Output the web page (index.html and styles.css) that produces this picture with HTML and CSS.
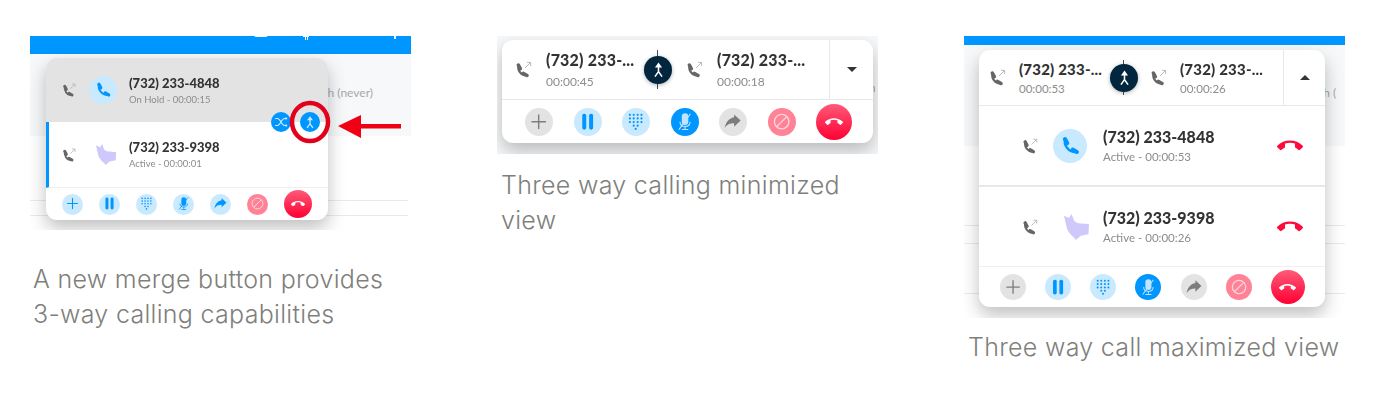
FILE: index.html
```html
<!DOCTYPE html>
<html lang="en">
<head>
  <meta charset="UTF-8" />
  <title>Three way calling</title>
  <link rel="stylesheet" href="styles.css">
</head>
<body>

  <!-- Shared icons -->
  <svg class="sprite" xmlns="http://www.w3.org/2000/svg">
    <symbol id="i-phone" viewBox="0 0 24 24">
      <g fill="none" stroke="currentColor" stroke-linecap="round">
        <path d="M7 5C4.500 10 10 19 19 18.500" stroke-width="2.600"/>
        <path d="M6.500 4.500L9 9M15 16l4.500 2.500" stroke-width="4.500"/>
      </g>
    </symbol>
    <symbol id="i-outgoing" viewBox="0 0 24 24">
      <g fill="none" stroke="currentColor" stroke-linecap="round">
        <path d="M6 7C4 12 8.500 20 16 19.500" stroke-width="2.800"/>
        <path d="M5.500 6.500L8 11M12 17l4.500 2.500" stroke-width="4.500"/>
      </g>
      <path d="M14 10l7-7M16.500 3H21v4.500" fill="none" stroke="#b5b5b5" stroke-width="1.200"/>
    </symbol>
    <symbol id="i-hangup" viewBox="0 0 24 24"><path d="M12 9c-1.600 0-3.150.25-4.600.72v3.100c0 .39-.23.74-.56.9-.98.49-1.870 1.120-2.660 1.850-.18.18-.43.28-.7.28-.28 0-.53-.11-.71-.29L.29 13.080c-.18-.17-.29-.42-.29-.7 0-.28.11-.53.29-.71C3.340 8.780 7.460 7 12 7s8.660 1.780 11.710 4.670c.18.18.29.43.29.71 0 .28-.11.53-.29.71l-2.480 2.480c-.18.18-.43.29-.71.29-.27 0-.52-.11-.7-.28-.79-.74-1.690-1.360-2.670-1.850-.33-.16-.56-.5-.56-.9v-3.100C15.150 9.250 13.600 9 12 9z"/></symbol>
    <symbol id="i-plus" viewBox="0 0 24 24"><path d="M12 2v20M2 12h20" fill="none" stroke="currentColor" stroke-width="2"/></symbol>
    <symbol id="i-pause" viewBox="0 0 24 24"><rect x="4.500" y="1" width="5.500" height="22" rx="2.500"/><rect x="14" y="1" width="5.500" height="22" rx="2.500"/></symbol>
    <symbol id="i-dial" viewBox="0 0 24 24">
      <circle cx="4" cy="2.500" r="1.500"/><circle cx="9.300" cy="2.500" r="1.500"/><circle cx="14.700" cy="2.500" r="1.500"/><circle cx="20" cy="2.500" r="1.500"/>
      <circle cx="4" cy="7.500" r="1.500"/><circle cx="9.300" cy="7.500" r="1.500"/><circle cx="14.700" cy="7.500" r="1.500"/><circle cx="20" cy="7.500" r="1.500"/>
      <circle cx="4" cy="12.500" r="1.500"/><circle cx="9.300" cy="12.500" r="1.500"/><circle cx="14.700" cy="12.500" r="1.500"/><circle cx="20" cy="12.500" r="1.500"/>
      <circle cx="9.300" cy="17.500" r="1.500"/><circle cx="14.700" cy="17.500" r="1.500"/><circle cx="12" cy="22" r="1.500"/>
    </symbol>
    <symbol id="i-mic" viewBox="0 0 24 24">
      <path d="M8 5a4.500 4.500 0 0 1 9 0v7a4.500 4.500 0 0 1-9 0z"/>
      <path d="M5.500 12c0 4 3 6.500 7 6.500s7-2.500 7-6.500M12.500 18.500V22M8 23h9" fill="none" stroke="currentColor" stroke-width="1.500"/>
      <path d="M20 1L4 23" fill="none" stroke="currentColor" stroke-width="1.500"/>
    </symbol>
    <symbol id="i-forward" viewBox="0 0 24 24"><path d="M14 6V2l9 8.500-9 8.500v-4.700C8 14.300 4 16 1 21 2 14 6 7.500 14 6z"/></symbol>
    <symbol id="i-block" viewBox="0 0 24 24"><circle cx="12" cy="12" r="10" fill="none" stroke="currentColor" stroke-width="1.800"/><path d="M5 19L19 5" stroke="currentColor" stroke-width="1.800"/></symbol>
    <symbol id="i-merge" viewBox="0 0 24 24">
      <path d="M12 2l-5 7h10z"/>
      <path d="M12 8v8M12 15l-5 7M12 15l5 7" fill="none" stroke="currentColor" stroke-width="2.200"/>
    </symbol>
    <symbol id="i-swap" viewBox="0 0 24 24">
      <path d="M2 6h4c5 0 7 12 12 12h4M2 18h4c5 0 7-12 12-12h4" fill="none" stroke="currentColor" stroke-width="1.800"/>
      <path d="M20 3l3 3-3 3zM20 15l3 3-3 3z"/>
    </symbol>
    <symbol id="i-cat" viewBox="0 0 24 24"><path d="M0 1.500L4.700 3.700 7 0l2.300 6.200C11 8 13 8.500 15.500 8.700l7.500.6-.4 9.300-7.100 1.400-4.600 4-1.600-2.300C6 19 2.500 15 2.200 11z"/></symbol>
  </svg>

  <main class="page">

    <!-- Merge button on the two line view -->
    <figure class="fig">
      <div class="shot shot-merge">
        <svg class="topbar-bits" width="381" height="8">
          <path d="M224 0h14l-2 1h-10zM273 0h6v1h-1v3h-1v-3h-1v3h-1v-3h-2zM364 0h2v3h-2z" fill="#fff"/>
        </svg>
        <span class="ghost ghost-merge">sh (never)</span>
        <div class="card card-sm">
          <div class="call on-hold">
            <svg class="ico-out"><use href="#i-outgoing"/></svg>
            <span class="avatar"><svg><use href="#i-phone"/></svg></span>
            <div>
              <div class="name">(732) 233-4848</div>
              <div class="sub">On Hold - 00:00:15</div>
            </div>
          </div>
          <div class="call active">
            <svg class="ico-out"><use href="#i-outgoing"/></svg>
            <span class="avatar avatar-cat"><svg><use href="#i-cat"/></svg></span>
            <div>
              <div class="name">(732) 233-9398</div>
              <div class="sub">Active - 00:00:01</div>
            </div>
          </div>
          <div class="toolbar">
            <button class="btn"><svg><use href="#i-plus"/></svg></button>
            <button class="btn"><svg><use href="#i-pause"/></svg></button>
            <button class="btn"><svg><use href="#i-dial"/></svg></button>
            <button class="btn"><svg><use href="#i-mic"/></svg></button>
            <button class="btn"><svg><use href="#i-forward"/></svg></button>
            <button class="btn btn-block"><svg><use href="#i-block"/></svg></button>
            <button class="btn btn-end"><svg><use href="#i-hangup"/></svg></button>
          </div>
          <div class="card-actions">
            <button class="btn-float"><svg><use href="#i-swap"/></svg></button>
            <button class="btn-float"><svg><use href="#i-merge"/></svg></button>
          </div>
        </div>
        <!-- Red callout round the merge button -->
        <svg class="callout" width="381" height="194">
          <ellipse cx="280" cy="86" rx="18" ry="19" fill="none" stroke="#e3001b" stroke-width="4.500"/>
          <path d="M308 90l23-11v9h40v4.500h-40v9.500z" fill="#f00014"/>
        </svg>
      </div>
      <figcaption class="caption caption-merge">A new merge button provides<br>3-way calling capabilities</figcaption>
    </figure>

    <!-- Minimized view -->
    <figure class="fig">
      <div class="shot shot-min">
        <span class="ghost ghost-min">h</span>
        <div class="card card-md">
          <div class="legs">
            <div class="leg leg-first">
              <svg class="ico-out"><use href="#i-outgoing"/></svg>
              <div>
                <div class="name">(732) 233-...</div>
                <div class="sub">00:00:45</div>
              </div>
            </div>
            <div class="join"><span class="join-btn"><svg><use href="#i-merge"/></svg></span></div>
            <div class="leg leg-second">
              <svg class="ico-out"><use href="#i-outgoing"/></svg>
              <div>
                <div class="name">(732) 233-...</div>
                <div class="sub">00:00:18</div>
              </div>
            </div>
            <div class="toggle"><span class="caret-down"></span></div>
          </div>
          <div class="toolbar">
            <button class="btn btn-gray"><svg><use href="#i-plus"/></svg></button>
            <button class="btn"><svg><use href="#i-pause"/></svg></button>
            <button class="btn"><svg><use href="#i-dial"/></svg></button>
            <button class="btn btn-on"><svg><use href="#i-mic"/></svg></button>
            <button class="btn btn-gray"><svg><use href="#i-forward"/></svg></button>
            <button class="btn btn-block"><svg><use href="#i-block"/></svg></button>
            <button class="btn btn-end"><svg><use href="#i-hangup"/></svg></button>
          </div>
        </div>
      </div>
      <figcaption class="caption caption-min">Three way calling minimized<br>view</figcaption>
    </figure>

    <!-- Maximized view -->
    <figure class="fig">
      <div class="shot shot-max">
        <span class="ghost ghost-max">sh (</span>
        <div class="card card-lg">
          <div class="legs">
            <div class="leg leg-first">
              <svg class="ico-out"><use href="#i-outgoing"/></svg>
              <div>
                <div class="name">(732) 233-...</div>
                <div class="sub">00:00:53</div>
              </div>
            </div>
            <div class="join"><span class="join-btn"><svg><use href="#i-merge"/></svg></span></div>
            <div class="leg leg-second">
              <svg class="ico-out"><use href="#i-outgoing"/></svg>
              <div>
                <div class="name">(732) 233-...</div>
                <div class="sub">00:00:26</div>
              </div>
            </div>
            <div class="toggle"><span class="caret-up"></span></div>
          </div>
          <div class="call">
            <svg class="ico-out"><use href="#i-outgoing"/></svg>
            <span class="avatar"><svg><use href="#i-phone"/></svg></span>
            <div class="call-text">
              <div class="name">(732) 233-4848</div>
              <div class="sub">Active - 00:00:53</div>
            </div>
            <svg class="ico-end"><use href="#i-hangup"/></svg>
          </div>
          <div class="call">
            <svg class="ico-out"><use href="#i-outgoing"/></svg>
            <span class="avatar avatar-cat"><svg><use href="#i-cat"/></svg></span>
            <div class="call-text">
              <div class="name">(732) 233-9398</div>
              <div class="sub">Active - 00:00:26</div>
            </div>
            <svg class="ico-end"><use href="#i-hangup"/></svg>
          </div>
          <div class="toolbar">
            <button class="btn btn-gray"><svg><use href="#i-plus"/></svg></button>
            <button class="btn"><svg><use href="#i-pause"/></svg></button>
            <button class="btn"><svg><use href="#i-dial"/></svg></button>
            <button class="btn btn-on"><svg><use href="#i-mic"/></svg></button>
            <button class="btn btn-gray"><svg><use href="#i-forward"/></svg></button>
            <button class="btn btn-block"><svg><use href="#i-block"/></svg></button>
            <button class="btn btn-end"><svg><use href="#i-hangup"/></svg></button>
          </div>
        </div>
      </div>
      <figcaption class="caption caption-max">Three way call maximized view</figcaption>
    </figure>

  </main>
</body>
</html>
```

FILE: styles.css
```css
* { box-sizing: border-box; }

body {
  margin: 0;
  background: #fff;
  font-family: 'Lato', sans-serif;
  overflow: hidden;
}

.sprite { display: none; }

/* Three figures side by side */
.page {
  display: flex;
  gap: 86px;
  padding: 36px 0 0 30px;
}

.fig {
  margin: 0;
  width: 381px;
  flex: none;
}

/* Captions under the screenshots */
.caption {
  font-family: 'Inter', sans-serif;
  font-weight: 300;
  font-size: 25px;
  letter-spacing: 0.3px;
  line-height: 35px;
  color: #7f7f7c;
}

.caption-merge { margin-top: 32px; padding-left: 3px; }
.caption-min { margin-top: 14px; padding-left: 4px; }
.caption-max { margin-top: 12px; padding-left: 4px; white-space: nowrap; }

/* Screenshot frames, the app behind the call card is only painted background */
.shot {
  position: relative;
  overflow: hidden;
  filter: blur(0.4px);
}

.shot-merge {
  height: 194px;
  padding: 22px 0 0 16px;
  background:
    linear-gradient(#0096ff, #0096ff) 0 0 / 100% 18px no-repeat,
    linear-gradient(#eaeaea, #eaeaea) 0 164px / 378px 1px no-repeat,
    linear-gradient(#eaeaea, #eaeaea) 0 179px / 378px 1px no-repeat,
    linear-gradient(#f6f8fa, #f6f8fa) 0 18px / 100% 82px no-repeat;
}

.shot-min {
  height: 118px;
  padding: 4px 0 0 5px;
  background: #f7f8fa;
}

.shot-max {
  height: 282px;
  padding: 14px 0 0 15px;
  background:
    linear-gradient(#0096ff, #0096ff) 0 0 / 100% 9px no-repeat,
    linear-gradient(#eaeaea, #eaeaea) 0 189px / 100% 1px no-repeat,
    linear-gradient(#eaeaea, #eaeaea) 0 207px / 100% 1px no-repeat,
    linear-gradient(#eaeaea, #eaeaea) 0 257px / 100% 1px no-repeat,
    linear-gradient(#f6f8fa, #f6f8fa) 0 9px / 100% 101px no-repeat;
}

.topbar-bits {
  position: absolute;
  left: 0;
  top: 0;
}

.ghost {
  position: absolute;
  font-size: 12px;
  line-height: 14px;
  color: #a9a9a9;
  white-space: nowrap;
}

.ghost-merge { right: 38px; top: 50px; }
.ghost-min { left: 372px; top: 45px; }
.ghost-max { left: 354px; top: 50px; }

.callout {
  position: absolute;
  left: 0;
  top: 0;
}

/* Call card */
.card {
  position: relative;
  display: flex;
  flex-direction: column;
  background: #fff;
  border-radius: 11px;
  box-shadow: 0 8px 18px rgba(0, 0, 0, 0.25);
}

.card-sm { width: 282px; height: 162px; --btn: 21px; --end: 28px; }
.card-md { width: 371px; height: 103px; --btn: 28px; --end: 36px; }
.card-lg { width: 346px; height: 257px; --btn: 26px; --end: 34px; }

.name {
  font-weight: 900;
  color: #333;
  white-space: nowrap;
}

.sub {
  color: #8c8c8c;
  white-space: nowrap;
}

.ico-out {
  flex: none;
  color: #666;
}

/* A single call row */
.call {
  display: flex;
  align-items: center;
}

.avatar {
  flex: none;
  display: flex;
  align-items: center;
  justify-content: center;
  border-radius: 50%;
  background: #c9e9ff;
  color: #0096ff;
}

.avatar-cat {
  background: none;
  justify-content: flex-end;
  fill: #cfc8fb;
}

.card-sm .call {
  height: 64px;
  padding-left: 15px;
  gap: 12px;
}

.card-sm .call .name { font-size: 13px; line-height: 17px; margin-top: 2px; }
.card-sm .call .sub { font-size: 9.500px; line-height: 16px; }
.card-sm .ico-out { width: 16px; height: 16px; }
.card-sm .avatar { width: 28px; height: 28px; }
.card-sm .avatar svg { width: 18px; height: 18px; }
.card-sm .avatar-cat svg { width: 21px; height: 21px; }

.on-hold {
  background: #e3e3e3;
  border-radius: 11px 11px 0 0;
}

.card-sm .active {
  height: 66px;
  padding-left: 12px;
  border-left: 3px solid #0096ff;
  border-bottom: 1px solid #eee;
}

.card-lg .call {
  height: 81px;
  padding: 0 22px 0 42px;
  gap: 14px;
  border-bottom: 2px solid #e8e8e8;
}

.card-lg .call + .call {
  height: 80px;
  border-bottom: 1px solid #eee;
}

.card-lg .call .ico-out { width: 18px; height: 18px; }
.card-lg .avatar { width: 34px; height: 34px; }
.card-lg .avatar svg { width: 22px; height: 22px; }
.card-lg .avatar-cat svg { width: 26px; height: 26px; margin-right: -3px; }
.card-lg .call .name { font-size: 16px; line-height: 19px; }
.card-lg .call .sub { font-size: 11.500px; line-height: 16px; margin-top: 3px; }

.call-text { flex: 1; padding-left: 2px; }

.ico-end {
  width: 26px;
  height: 26px;
  fill: #ff0a3c;
}

/* Collapsed view with both legs */
.legs {
  display: flex;
  border-bottom: 1px solid #e8e8e8;
}

.card-md .legs { height: 60px; }
.card-lg .legs { height: 56px; }

.leg {
  display: flex;
  align-items: center;
}

.leg .ico-out { width: 19px; height: 19px; }

.card-md .leg { gap: 13px; }
.card-md .leg-first { width: 156px; padding-left: 12px; }
.card-md .leg-second { width: 171px; padding-left: 27px; gap: 13px; }
.card-md .leg .name { font-size: 16px; line-height: 20px; letter-spacing: 0.2px; }
.card-md .leg .sub { font-size: 12px; line-height: 15px; margin-top: 4px; }

.card-lg .leg { gap: 12px; }
.card-lg .leg-first { width: 145px; padding-left: 9px; }
.card-lg .leg-second { width: 159px; padding-left: 25px; }
.card-lg .leg .name { font-size: 15px; line-height: 18px; letter-spacing: 0.2px; }
.card-lg .leg .sub { font-size: 11.500px; line-height: 14px; margin-top: 4px; }

/* Zero width spot between the legs, holds the line and dark merge button */
.join {
  position: relative;
  width: 0;
}

.join::before {
  content: "";
  position: absolute;
  left: -1px;
  top: 10px;
  bottom: 10px;
  width: 1px;
  background: #3a5468;
}

.join-btn {
  position: absolute;
  top: 50%;
  left: 0;
  width: 28px;
  height: 28px;
  transform: translate(-50%, -50%);
  display: flex;
  align-items: center;
  justify-content: center;
  border-radius: 50%;
  background: #03263f;
  color: #fff;
  fill: #fff;
  box-shadow: 0 1px 4px rgba(0, 0, 0, 0.3);
}

.join-btn svg { width: 17px; height: 17px; }

.toggle {
  flex: 1;
  display: flex;
  align-items: center;
  justify-content: center;
  border-left: 1px solid #e8e8e8;
}

.caret-down {
  border: 5px solid transparent;
  border-top: 5px solid #333;
  border-bottom: 0;
}

.caret-up {
  border: 5px solid transparent;
  border-bottom: 5px solid #333;
  border-top: 0;
}

/* Bottom row of round buttons */
.toolbar {
  flex: 1;
  display: flex;
  align-items: center;
  justify-content: space-between;
}

.card-sm .toolbar { padding: 0 16px 0 16px; }
.card-md .toolbar { padding: 0 21px 0 23px; }
.card-lg .toolbar { padding: 0 20px 0 21px; }

.btn {
  width: var(--btn);
  height: var(--btn);
  padding: 0;
  border: none;
  border-radius: 50%;
  display: flex;
  align-items: center;
  justify-content: center;
  background: #c9e9ff;
  color: #0096ff;
  fill: #0096ff;
}

.btn svg {
  width: 62%;
  height: 62%;
}

.btn-gray {
  background: #e3e3e3;
  color: #7d7d7d;
  fill: #7d7d7d;
}

.btn-on {
  background: #0096ff;
  color: #bfe4ff;
  fill: #bfe4ff;
}

.btn-block {
  background: #ff8296;
  color: #ffd5dc;
  fill: #ffd5dc;
}

.btn-end {
  width: var(--end);
  height: var(--end);
  background: linear-gradient(#ff5a78, #ff0033);
  color: #fff;
  fill: #fff;
}

.btn-end svg {
  width: 50%;
  height: 50%;
}

/* Swap and merge buttons sitting on the row boundary */
.card-actions {
  position: absolute;
  right: 8px;
  top: 54px;
  display: flex;
  gap: 9px;
}

.btn-float {
  width: 20px;
  height: 20px;
  padding: 0;
  border: none;
  border-radius: 50%;
  display: flex;
  align-items: center;
  justify-content: center;
  background: #0096ff;
  color: #cfeaff;
  fill: #cfeaff;
}

.btn-float svg {
  width: 14px;
  height: 14px;
}
```
